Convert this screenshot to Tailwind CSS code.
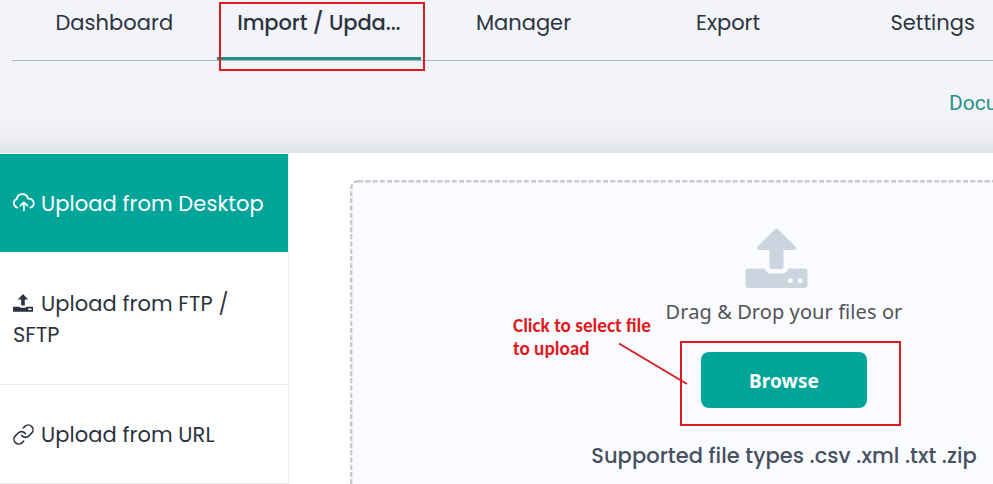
<!DOCTYPE html>
<html lang="en">
<head>
<meta charset="utf-8">
<title>Import / Update</title>
<script src="https://cdn.jsdelivr.net/npm/@tailwindcss/browser@4"></script>
</head>
<body class="relative h-[484px] w-[993px] overflow-hidden bg-white font-['Poppins','Inter',sans-serif] text-[21px] text-[#2b333e]">
<header class="h-[153px] overflow-hidden bg-linear-to-b from-[#f3f4f9] from-78% via-[#eeeff4] via-90% to-[#e0e3e9]">
  <nav class="ml-3 grid h-[61px] w-[1023px] grid-cols-5 border-b border-[#adb4bd] text-center leading-[46px]">
    <a><span class="tracking-[0.05px]">Dashboard</span></a>
    <a class="h-[60px] border-b-3 border-[#209187] font-medium"><span class="tracking-[-0.1px]">Import / Upda...</span></a>
    <a><span>Manager</span></a>
    <a><span>Export</span></a>
    <a><span>Settings</span></a>
  </nav>
  <div class="flex pt-[28px] pl-[949px] font-[Roboto,sans-serif] text-[21px] leading-[28px] text-[#1f9388]"><a class="whitespace-nowrap">Documentation</a></div>
</header>
<main class="flex h-[331px] overflow-hidden">
  <aside class="w-[289px] shrink-0 border-r border-[#e9ecef] leading-[31px]">
    <div class="mt-px flex h-[98px] items-center bg-[#00a59a] pl-[13px] text-white">
      <svg class="mr-[6px] h-[22px] w-[22px] shrink-0" viewBox="0 0 22 22" fill="none" stroke="currentColor" stroke-width="1.8" stroke-linecap="round" stroke-linejoin="round"><path d="M4.200 15.600C1.800 14.800.9 13.200.9 11.200c0-2.100 1.100-3.500 2.700-4C4.200 4.300 6.200 2.200 9.400 2.200c3.100 0 5 1.800 5.700 4.500 3.300-.2 5.700 1.800 5.700 4.500 0 2.200-1.300 3.900-3.400 4.400M10.900 18.300v-7.300M7.300 13.700l3.600-3.300 3.600 3.300"/></svg>
      <span class="whitespace-nowrap tracking-[0.08px]">Upload from Desktop</span>
    </div>
    <div class="h-[133px] border-b border-[#e9ecef] pt-[36px] pl-[13px]">
      <div class="flex items-center">
        <svg class="mr-[8px] h-[20px] w-[20px] shrink-0" viewBox="0 0 20 20" fill="#2b333e"><path d="M10 0l5.200 5.500h-3.400V11.500H8.200V5.500H4.800zM0 12.800h6.500q.5 1 1.500 1h4q1 0 1.500-1H20v5H0z"/><path fill="white" d="M15.200 14.500h3.300v1.500h-3.300z"/></svg>
        <span class="whitespace-nowrap tracking-[0.08px]">Upload from FTP /</span>
      </div>
      <span>SFTP</span>
    </div>
    <div class="flex h-[99px] items-center border-b border-[#e9ecef] pt-px pl-[13px]">
      <svg class="mr-[7px] h-[21px] w-[21px] shrink-0" viewBox="1 1 22 22" fill="none" stroke="currentColor" stroke-width="1.700" stroke-linecap="round"><path d="M10 13a5 5 0 0 0 7.540.540l3-3a5 5 0 0 0-7.070-7.070l-1.720 1.710M14 11a5 5 0 0 0-7.540-.540l-3 3a5 5 0 0 0 7.070 7.070l1.710-1.710"/></svg>
      <span class="whitespace-nowrap tracking-[0.08px]">Upload from URL</span>
    </div>
  </aside>
  <section class="pt-[27px] pl-[61px]">
    <div class="relative flex h-[304px] w-[643px] flex-col items-center overflow-hidden rounded-tl-lg bg-[#fafbfe] pt-[48px]">
      <svg class="absolute top-0 left-0 h-[380px] w-[868px]" viewBox="0 0 868 380" fill="none"><rect x="1.200" y="1.200" width="865.600" height="377.600" rx="7" stroke="#c3cbd1" stroke-width="2.400" stroke-dasharray="5 2.200"/></svg>
      <div class="flex w-[868px] shrink-0 flex-col items-center self-start">
        <svg class="mr-[15px] h-[61px] w-[63px]" viewBox="0 0 63 61" fill="#cbd5df"><path d="M30.200 1.200q1.300-1.300 2.600 0L50.500 18.500q1.500 3-1.500 3.500H38.500v17q0 2-2 2h-10q-2 0-2-2V22H14q-3-.5-1.500-3.500zM3 40.500h16.500q2 5 6 5h12q4 0 6-5H60q2.500 0 2.500 2.500v14q0 3-3 3h-56q-3 0-3-3V43q0-2.500 2.500-2.500z"/><g fill="#fafbfe"><circle cx="45.500" cy="52.800" r="2.500"/><circle cx="55" cy="52.800" r="2.500"/></g></svg>
        <div class="mt-[7px] font-['Noto_Sans',sans-serif] text-[20px] leading-[32px] whitespace-nowrap text-[#525358]"><span class="tracking-[0.08px]">Drag &amp; Drop your files or</span></div>
        <button class="mt-[24px] h-[56px] w-[166px] rounded-lg bg-[#00a59a] pt-[2px] font-['Noto_Sans',sans-serif] text-[19px] font-bold text-white"><span class="tracking-[0.1px]">Browse</span></button>
        <div class="mt-[32px] leading-[32px] font-medium whitespace-nowrap text-[#475061]"><span class="tracking-[0.06px]">Supported file types .csv .xml .txt .zip</span></div>
      </div>
    </div>
  </section>
</main>
<div class="absolute top-[2px] left-[219px] h-[69px] w-[206px] border-2 border-[#e0191f]"></div>
<div class="absolute top-[341px] left-[680px] h-[85px] w-[221px] border-2 border-[#e0191f]"></div>
<svg class="absolute top-[340px] left-[615px] h-[50px] w-[75px]" viewBox="0 0 75 50" stroke="#d81c24" stroke-width="2"><path d="M4 3.500L72 44"/></svg>
<div class="absolute top-[314px] left-[513px] font-['Carlito','Open_Sans',sans-serif] text-[19.2px] leading-[23px] font-bold whitespace-nowrap text-[#e0191f]"><span>Click to select file</span><br><span>to upload</span></div>
</body>
</html>
